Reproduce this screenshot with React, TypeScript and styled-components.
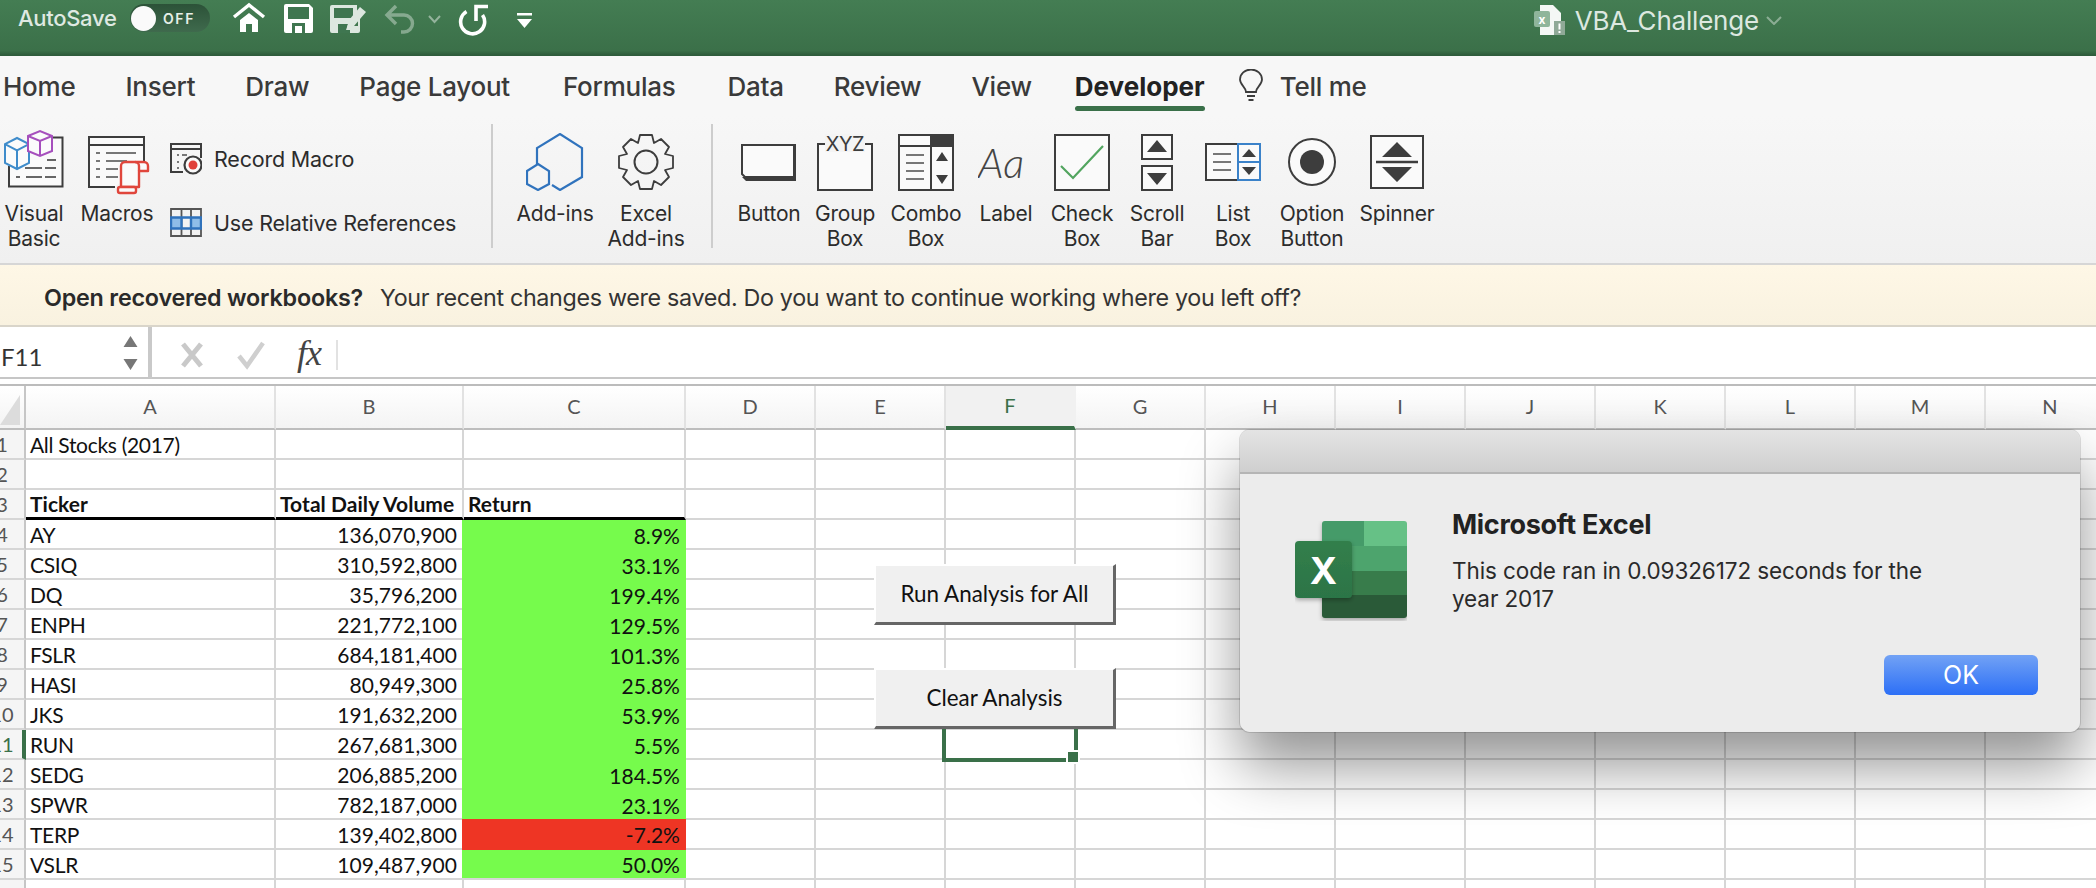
import React from "react";
import styled, { createGlobalStyle } from "styled-components";

const Global = createGlobalStyle`
  html, body { margin: 0; padding: 0; background: #fff; overflow: hidden; }
  * { box-sizing: border-box; }
  body { font-family: Inter, "Liberation Sans", sans-serif; }
`;

const Page = styled.div`
  width: 2096px; height: 888px; overflow: hidden;
  display: flex; flex-direction: column; position: relative;
`;

/* ---------- title bar ---------- */
const TitleBar = styled.header`
  height: 56px; flex: none; display: flex; align-items: flex-start;
  padding: 4px 314px 0 18px;
  background: linear-gradient(#447d53, #3b7049 92%, #2f5c3c);
  border-bottom: 1px solid #2f5c3c;
`;
const AutoSave = styled.span`
  width: 112px; font-size: 22px; line-height: 29px; font-weight: 500; letter-spacing: -0.3px;
  color: #dfe9e2; white-space: nowrap;
`;
const Toggle = styled.div`
  width: 80px; height: 28px; border-radius: 14px; background: linear-gradient(#2c5238, #3f6a4d);
  display: flex; align-items: center; gap: 7px; padding-left: 1px; margin-right: 22px;
`;
const Knob = styled.span`
  width: 25px; height: 25px; border-radius: 50%; background: #fafafa; flex: none;
`;
const OffText = styled.span`
  font-size: 14px; font-weight: 600; letter-spacing: 1.6px; color: #e6eee8;
`;
const QuickIcon = styled.svg<{ $gap?: number }>`
  flex: none; display: block; margin-left: ${(p) => p.$gap ?? 0}px;
`;
const FileName = styled.div`
  margin-left: auto; display: flex; align-items: center; gap: 7px; height: 32px;
  font-size: 26px; color: #dde8e0; letter-spacing: -0.2px;
`;

/* ---------- tabs ---------- */
const Tabs = styled.nav`
  height: 60px; flex: none; display: flex; align-items: flex-start; gap: 50px; padding: 14px 0 0 3px;
  background: #f7f7f7;
`;
const Tab = styled.span<{ $active?: boolean; $shift?: number }>`
  position: relative; font-size: 26px; line-height: 34px;
  margin-left: ${(p) => p.$shift ?? 0}px;
  letter-spacing: ${(p) => (p.$active ? "0" : "-0.25px")};
  font-weight: ${(p) => (p.$active ? 700 : 500)}; color: ${(p) => (p.$active ? "#222" : "#3a3a3a")};
  white-space: nowrap;
  ${(p) =>
    p.$active &&
    `&::after { content: ""; position: absolute; left: 0; right: 0; bottom: -7px; height: 5px; border-radius: 3px; background: #3a7049; }`}
`;
const TellMe = styled.div`
  display: flex; align-items: center; gap: 16px; margin-left: -17px;
`;

/* ---------- ribbon ---------- */
const Ribbon = styled.section`
  height: 149px; flex: none; display: flex; align-items: flex-start; padding-top: 6px;
  background: linear-gradient(#f7f7f7, #f0f0f0); border-bottom: 2px solid #d6d6d6;
`;
const Tool = styled.div<{ $w: number }>`
  width: ${(p) => p.$w}px; flex: none; display: flex; flex-direction: column; align-items: center;
`;
const ToolIcon = styled.div`
  height: 80px; display: flex; align-items: center; justify-content: center;
`;
const ToolLabel = styled.div`
  font-size: 21px; line-height: 24.5px; color: #2c2c2c; text-align: center; letter-spacing: -0.2px; white-space: nowrap;
`;
const SmallGroup = styled.div`
  width: 304px; flex: none; display: flex; flex-direction: column; margin: 5px 0 0 4px;
`;
const SmallRow = styled.div`
  height: 64px; display: flex; align-items: center; gap: 12px;
  font-size: 21.5px; color: #2c2c2c; letter-spacing: -0.2px; white-space: nowrap;
`;
const Divider = styled.div<{ $ml: number; $mr: number }>`
  width: 2px; height: 124px; background: #cdcdcd; flex: none; margin: 2px ${(p) => p.$mr}px 0 ${(p) => p.$ml}px;
`;

/* ---------- recovery banner ---------- */
const Banner = styled.div`
  height: 62px; flex: none; display: flex; align-items: center; gap: 17px; padding: 4px 0 0 44px;
  background: linear-gradient(#fef7e6, #f9f2e0); border-bottom: 2px solid #d9d5ca;
  font-size: 23.3px; color: #333; letter-spacing: -0.33px; white-space: nowrap;
`;
const BannerStrong = styled.strong`
  font-weight: 600; color: #2a2a2a; letter-spacing: -0.2px;
`;

/* ---------- formula bar ---------- */
const FormulaBar = styled.div`
  height: 59px; flex: none; display: flex; background: #fff;
  border-bottom: 2px solid #bcbcbc; position: relative;
`;
const FormulaEnd = styled.div`
  flex: 1; display: flex; align-items: flex-start; height: 52px;
  border-bottom: 2px solid #c6c6c6; padding-left: 28px;
`;
const NameBox = styled.div`
  width: 152px; height: 52px; flex: none; display: flex; align-items: center; justify-content: space-between;
  padding: 8px 10px 0 1px; border-right: 4px solid #c9c9c9; border-bottom: 2px solid #c6c6c6;
  font-family: Lato, sans-serif; font-size: 24px; color: #333;
`;
const Steppers = styled.svg`
  display: block; margin-top: -6px;
`;
const FormulaEdit = styled.div`
  flex: 1; height: 50px;
`;
const FormulaIcons = styled.div`
  display: flex; align-items: center; height: 50px; flex: none; padding-top: 5px;
`;
const Fx = styled.span`
  font-family: "Liberation Serif", serif; font-style: italic; font-size: 36px; color: #444; margin: -4px 15px 0 32px; letter-spacing: -1px;
`;
const FxBar = styled.span`
  width: 2px; height: 30px; background: #e2e2e2; margin-right: 20px;
`;

/* ---------- sheet ---------- */
const COLUMNS = "26px 250px 188px 222px repeat(11, 130px)";

const Sheet = styled.main`
  position: relative; flex: 1; min-height: 0; overflow: hidden; background: #fff;
  font-family: Lato, sans-serif; color: #111;
`;
const HeaderRow = styled.div`
  display: grid; grid-template-columns: ${COLUMNS}; height: 44px;
  background: linear-gradient(#fff, #f3f3f3);
`;
const Corner = styled.div`
  border-right: 2px solid #c6c6c6; border-bottom: 2px solid #bdbdbd; padding: 9px 4px 3px 0;
`;
const ColHead = styled.div<{ $active?: boolean }>`
  display: flex; align-items: center; justify-content: center; padding-bottom: 3px;
  font-size: 20px; color: ${(p) => (p.$active ? "#3a7049" : "#555")};
  background: ${(p) => (p.$active ? "#f1f1f1" : "transparent")};
  border-right: 2px solid ${(p) => (p.$active ? "#f1f1f1" : "#e2e2e2")};
  border-bottom: ${(p) => (p.$active ? "4px solid #3a7049" : "2px solid #bdbdbd")};
`;
const Row = styled.div`
  display: grid; grid-template-columns: ${COLUMNS}; height: 30px;
`;
const RowHead = styled.div<{ $active?: boolean }>`
  display: flex; justify-content: center; align-items: center; overflow: hidden;
  padding-right: ${(p) => (p.$active ? 18 : 20)}px;
  font-size: 20px; background: #f5f5f5; color: ${(p) => (p.$active ? "#3a7049" : "#555")};
  border-right: ${(p) => (p.$active ? "4px solid #3a7049" : "2px solid #c6c6c6")};
  border-bottom: 2px solid #d6d6d6;
`;
const RowNum = styled.span`
  flex: none; width: 8px; display: flex; justify-content: center;
`;
const Cell = styled.div<{ $right?: boolean; $bold?: boolean; $rule?: boolean }>`
  display: flex; align-items: center; overflow: hidden; white-space: nowrap;
  justify-content: ${(p) => (p.$right ? "flex-end" : "flex-start")};
  padding: 0 5px 0 4px;
  font-size: 21px; font-weight: ${(p) => (p.$bold ? 700 : 400)};
  letter-spacing: ${(p) => (p.$right || p.$bold ? "0.05px" : "-0.3px")};
  border-right: 2px solid #d6d6d6;
  border-bottom: ${(p) => (p.$rule ? "3px solid #000" : "2px solid #d6d6d6")};
`;
const FillCell = styled.div<{ $bad?: boolean; $last?: boolean }>`
  display: flex; align-items: center; justify-content: flex-end; white-space: nowrap;
  margin-left: -2px; padding: 0 6px 0 4px; position: relative;
  font-size: 21px; letter-spacing: 0.05px;
  background: ${(p) => (p.$bad ? "#ee3524" : "#76fb4c")};
  ${(p) => p.$bad && "margin-top: -1px;"}
  ${(p) => p.$last && "border-bottom: 2px solid #d6d6d6;"}
`;
const Selection = styled.div`
  position: absolute; left: 942px; top: 330px; width: 136px; height: 46px;
  border: 4px solid #3a7049; border-top: none;
`;
const Handle = styled.span`
  position: absolute; right: -6px; bottom: -6px; width: 14px; height: 14px;
  background: #3a7049; border: 2px solid #fff;
`;
const MacroButton = styled.div<{ $top: number }>`
  position: absolute; left: 874px; top: ${(p) => p.$top}px; width: 242px; height: 61px;
  display: flex; align-items: center; justify-content: center; padding-bottom: 1px;
  background: #f0f0f0; color: #111; font-size: 22.4px; letter-spacing: 0;
  border-style: solid; border-width: 2px 3px 3px 2px; border-color: #fff #666 #666 #fff;
`;

/* ---------- dialog ---------- */
const Dialog = styled.aside`
  position: absolute; left: 1240px; top: 44px; width: 840px; height: 302px;
  display: flex; flex-direction: column; border-radius: 10px; overflow: hidden;
  background: #ececec; font-family: Inter, sans-serif;
  box-shadow: 0 0 0 1px rgba(0,0,0,.12);
`;
const DialogShadow = styled.div`
  position: absolute; left: 1240px; top: 44px; width: 840px; height: 302px; border-radius: 10px;
  box-shadow: 0 34px 58px rgba(0,0,0,.42);
`;
const DialogHead = styled.div`
  height: 44px; flex: none; background: linear-gradient(#e4e4e4, #cfcfcf); border-bottom: 2px solid #b5b5b5;
`;
const DialogBody = styled.div`
  flex: 1; display: flex; padding-left: 55px;
`;
const ExcelIcon = styled.svg`
  flex: none; margin: 47px 45px 0 0; display: block;
`;
const DialogText = styled.div`
  width: 510px; padding-top: 35px;
`;
const DialogTitle = styled.div`
  font-size: 27px; line-height: 32px; font-weight: 700; color: #222; letter-spacing: -0.3px;
`;
const DialogMessage = styled.div`
  margin-top: 16px; font-size: 22.5px; line-height: 28px; color: #2a2a2a; letter-spacing: -0.1px;
`;
const DialogFooter = styled.div`
  display: flex; justify-content: flex-end; padding: 0 42px 37px 0;
`;
const OkButton = styled.div`
  width: 154px; height: 40px; border-radius: 6px; display: flex; align-items: center; justify-content: center;
  background: linear-gradient(#72a2f5, #2c6ff6); color: #fff; font-size: 25px;
`;

/* ---------- drawings ---------- */
const D = "#3d3d3d";

const Home = () => (
  <QuickIcon $gap={0} width="34" height="30" viewBox="0 0 34 30" style={{ marginTop: -2 }}>
    <path d="M2 15 17 3 32 15" fill="none" stroke="#fff" strokeWidth="3.4" />
    <path d="M8 18 17 11 26 18V30H20V22H14V30H8Z" fill="#fff" />
  </QuickIcon>
);
const Save = () => (
  <QuickIcon $gap={18} width="29" height="29" viewBox="0 0 29 29">
    <path d="M2 0H25L29 4V27a2 2 0 0 1-2 2H2a2 2 0 0 1-2-2V2a2 2 0 0 1 2-2Z" fill="#fff" />
    <rect x="4" y="3" width="21" height="12" fill="#3f7650" />
    <path d="M8 29V19H21V29Z" fill="#3f7650" />
    <rect x="11" y="22" width="7" height="7" fill="#fff" />
  </QuickIcon>
);
const SaveEdit = () => (
  <QuickIcon $gap={17} width="38" height="29" viewBox="0 0 38 29">
    <path d="M2 1H27V8L21 15V22H28V13L30 11V27a2 2 0 0 1-2 2H2a2 2 0 0 1-2-2V3a2 2 0 0 1 2-2Z" fill="#dce7df" />
    <rect x="4" y="4" width="19" height="10" fill="#3f7650" />
    <path d="M8 29V20H18L16 26 20 26V29Z" fill="#3f7650" />
    <path d="M30 3 36 8 24 22 17 24 19 16Z" fill="#dce7df" />
  </QuickIcon>
);
const Undo = () => (
  <QuickIcon $gap={16} width="31" height="30" viewBox="0 0 31 30" opacity=".42">
    <path d="M12 2 3 11 12 20M3 11H20a8.500 8.500 0 0 1 0 17H17" fill="none" stroke="#e6eee8" strokeWidth="3.4" />
  </QuickIcon>
);
const MiniChevron = () => (
  <QuickIcon $gap={13} width="13" height="9" viewBox="0 0 13 9" opacity=".5" style={{ marginTop: 11 }}>
    <path d="M1 1 6.500 7 12 1" fill="none" stroke="#e6eee8" strokeWidth="2" />
  </QuickIcon>
);
const Redo = () => (
  <QuickIcon $gap={17} width="30" height="32" viewBox="0 0 30 32">
    <path d="M8.500 7.500A12 12 0 1 0 24.500 11" fill="none" stroke="#fff" strokeWidth="3.600" />
    <path d="M18 17V2.500H30" fill="none" stroke="#fff" strokeWidth="3.600" />
  </QuickIcon>
);
const Customize = () => (
  <QuickIcon $gap={29} width="15" height="15" viewBox="0 0 15 15" style={{ marginTop: 9 }}>
    <rect x="0" y="0" width="15" height="2.5" fill="#fff" />
    <path d="M0 6H15L7.500 15Z" fill="#fff" />
  </QuickIcon>
);
const DocIcon = () => (
  <svg width="34" height="30" viewBox="0 0 34 30">
    <path d="M6 0H19L27 8V30H6Z" fill="#f4f7f5" />
    <rect x="0" y="6" width="16" height="16" rx="2" fill="#8fb59b" />
    <text x="8" y="19" fontFamily="Inter" fontSize="12" fontWeight="700" fill="#fff" textAnchor="middle">x</text>
    <rect x="20" y="16" width="11" height="14" fill="#8fa997" />
    <rect x="24.5" y="18.5" width="2" height="6" fill="#fff" />
    <rect x="24.5" y="26" width="2" height="2" fill="#fff" />
  </svg>
);
const Bulb = () => (
  <svg width="26" height="34" viewBox="0 0 26 34" style={{ marginTop: -2 }}>
    <path d="M8 23C8 18 2 16 2 10.500A11 10 0 0 1 24 10.500C24 16 18 18 18 23Z" fill="none" stroke="#3d3d3d" strokeWidth="1.8" />
    <path d="M9 27H17M10.500 31H15.500" stroke="#3d3d3d" strokeWidth="2" />
  </svg>
);
const Cube = ({ c, x, y, w, h }: { c: string; x: number; y: number; w: number; h: number }) => {
  const t = h * 0.2;
  const m = x + w / 2;
  return (
    <g fill="#fbfbfb" stroke={c} strokeWidth="2">
      <path d={`M${x} ${y + t}L${m} ${y}L${x + w} ${y + t}V${y + h - t}L${m} ${y + h}L${x} ${y + h - t}Z`} />
      <path d={`M${x} ${y + t}L${m} ${y + 2 * t}L${x + w} ${y + t}M${m} ${y + 2 * t}V${y + h}`} fill="none" />
    </g>
  );
};
const VbIcon = () => (
  <svg width="68" height="80" viewBox="0 0 68 80">
    <path d="M50 15.500H62.500V64.500H9V44" fill="#fafafa" stroke={D} strokeWidth="2" />
    <path d="M47 38H56M25 46H42M45 46H56M16 55H20M26 55H42M45 55H56" stroke="#666" strokeWidth="2" />
    <Cube c="#3f8ccb" x={5} y={16} w={24} h={31} />
    <Cube c="#a64fbd" x={28} y={9} w={24} h={25} />
  </svg>
);
const MacrosIcon = () => (
  <svg width="98" height="80" viewBox="0 0 98 80">
    <path d="M47 65H21V15H76V40" fill="#fafafa" stroke={D} strokeWidth="2" />
    <path d="M21 23H76" stroke={D} strokeWidth="2" />
    <path d="M28 31H32M38 31H68M28 39H32M38 39H59M28 47H32M38 47H50M28 55H32M38 55H50" stroke="#777" strokeWidth="2" />
    <path d="M53 65V44a4 4 0 0 1 4-4H76a4 4 0 0 1 4 4V49H71V65H53Z" fill="#fafafa" stroke="#e0463c" strokeWidth="2.400" strokeLinejoin="round" />
    <path d="M67 40a4 4 0 0 1 4 4V49" fill="none" stroke="#e0463c" strokeWidth="2.400" />
    <rect x="50" y="65" width="18" height="6" rx="2" fill="#fafafa" stroke="#e0463c" strokeWidth="2.400" />
  </svg>
);
const RecordIcon = () => (
  <svg width="32" height="32" viewBox="0 0 32 32">
    <path d="M31 15V1H1V29H13M1 6H31" fill="none" stroke={D} strokeWidth="2" />
    <path d="M7 12H9M7 19H9M7 25H9M12 12H17" stroke="#777" strokeWidth="2" />
    <circle cx="23" cy="22" r="8.500" fill="#fafafa" stroke={D} strokeWidth="2.200" />
    <circle cx="23" cy="22" r="4.500" fill="#e0403a" />
  </svg>
);
const RelativeIcon = () => (
  <svg width="32" height="30" viewBox="0 0 32 30">
    <path d="M1 1H31V28H1ZM11.500 1V28M21 1V28" fill="none" stroke="#555" strokeWidth="1.800" />
    <rect x="1" y="9.500" width="10.500" height="11" fill="#8fbde8" />
    <rect x="21" y="9.500" width="10" height="11" fill="#8fbde8" />
    <path d="M1 9.500H31V20.500H1ZM11.500 9.500V20.500M21 9.500V20.500" fill="none" stroke="#2f72bc" strokeWidth="2.400" />
  </svg>
);
const AddInsIcon = () => (
  <svg width="58" height="58" viewBox="0 0 58 58">
    <path d="M11 32V15L34 1 56 15V44L34 57 26 52" fill="none" stroke="#3073bd" strokeWidth="2.200" />
    <path d="M12 31 23 38V51L12 57 1 51V38Z" fill="none" stroke="#3073bd" strokeWidth="2.200" />
  </svg>
);
const GearIcon = () => (
  <svg width="58" height="58" viewBox="0 0 58 58">
    <path
      d="M23 2H35L37 10 44 6 52 14 48 21 56 23V35L48 37 52 44 44 52 37 48 35 56H23L21 48 14 52 6 44 10 37 2 35V23L10 21 6 14 14 6 21 10Z"
      fill="none" stroke={D} strokeWidth="1.800" strokeLinejoin="round"
    />
    <circle cx="29" cy="29" r="11.500" fill="none" stroke={D} strokeWidth="2" />
  </svg>
);
const ButtonIcon = () => (
  <svg width="56" height="37" viewBox="0 0 56 37">
    <path d="M1 1H54V33H4L1 30Z" fill="#fafafa" stroke={D} strokeWidth="2" />
    <path d="M55 1V37H5L1 33H52V1Z" fill={D} />
  </svg>
);
const GroupIcon = () => (
  <svg width="56" height="57" viewBox="0 0 56 57">
    <rect x="1" y="10" width="54" height="46" fill="#fafafa" stroke={D} strokeWidth="2" />
    <rect x="8" y="0" width="40" height="18" fill="#f4f4f4" />
    <text x="28" y="17" fontFamily="Inter" fontSize="20" fill={D} textAnchor="middle" letterSpacing="-0.500">XYZ</text>
  </svg>
);
const ComboIcon = () => (
  <svg width="56" height="57" viewBox="0 0 56 57">
    <rect x="1" y="1" width="54" height="55" fill="#fafafa" stroke={D} strokeWidth="2" />
    <rect x="32" y="1" width="23" height="11" fill={D} />
    <path d="M1 12H55M33 12V56" stroke={D} strokeWidth="2" />
    <path d="M8 21H26M8 29H26M8 37H26M8 45H26" stroke="#777" strokeWidth="2" />
    <path d="M38 27 44 18 50 27ZM38 41H50L44 50Z" fill={D} />
  </svg>
);
const LabelIcon = () => (
  <svg width="56" height="40" viewBox="0 0 56 40">
    <text x="0" y="36" fontFamily="Lato, sans-serif" fontWeight="300" fontStyle="italic" fontSize="42" fill="#444">Aa</text>
  </svg>
);
const CheckIcon = () => (
  <svg width="56" height="57" viewBox="0 0 56 57">
    <rect x="1" y="1" width="54" height="55" fill="#fafafa" stroke={D} strokeWidth="2" />
    <path d="M7 32 19 44 49 12" fill="none" stroke="#52a55f" strokeWidth="2.200" />
  </svg>
);
const ScrollIcon = () => (
  <svg width="32" height="57" viewBox="0 0 32 57">
    <rect x="1" y="1" width="30" height="24" fill="#fafafa" stroke={D} strokeWidth="2" />
    <rect x="1" y="32" width="30" height="24" fill="#fafafa" stroke={D} strokeWidth="2" />
    <path d="M6 18 16 6 26 18ZM6 39H26L16 51Z" fill={D} />
  </svg>
);
const ListIcon = () => (
  <svg width="56" height="38" viewBox="0 0 56 38">
    <rect x="1" y="1" width="54" height="36" fill="#fafafa" stroke={D} strokeWidth="2" />
    <path d="M8 11H26M8 19H26M8 27H26" stroke="#777" strokeWidth="2" />
    <rect x="33" y="1" width="22" height="18" fill="#fafafa" stroke="#3b82c9" strokeWidth="2" />
    <rect x="33" y="19" width="22" height="18" fill="#fafafa" stroke="#3b82c9" strokeWidth="2" />
    <path d="M37 14 44 6 51 14ZM37 24H51L44 32Z" fill={D} />
  </svg>
);
const OptionIcon = () => (
  <svg width="48" height="48" viewBox="0 0 48 48">
    <circle cx="24" cy="24" r="23" fill="#fafafa" stroke={D} strokeWidth="2" />
    <circle cx="24" cy="24" r="12" fill={D} />
  </svg>
);
const SpinnerIcon = () => (
  <svg width="54" height="54" viewBox="0 0 54 54">
    <rect x="1" y="1" width="52" height="52" fill="#fafafa" stroke={D} strokeWidth="2" />
    <path d="M12 22 27 7 42 22ZM12 32H42L27 47Z" fill={D} />
    <path d="M6 27H48" stroke={D} strokeWidth="2.500" />
  </svg>
);

const Excel = () => (
  <ExcelIcon width="112" height="100" viewBox="0 0 112 100">
    <defs>
      <filter id="soft" x="-20%" y="-20%" width="140%" height="140%">
        <feDropShadow dx="0" dy="2" stdDeviation="2" floodOpacity=".3" />
      </filter>
      <linearGradient id="front" x1="0" y1="0" x2="0" y2="1">
        <stop offset="0" stopColor="#327f4c" />
        <stop offset="1" stopColor="#2c7446" />
      </linearGradient>
    </defs>
    <g filter="url(#soft)">
      <path d="M30 0H69V25H27V3a3 3 0 0 1 3-3Z" fill="#459b69" />
      <path d="M69 0H109a3 3 0 0 1 3 3V25H69Z" fill="#66c186" />
      <rect x="27" y="25" width="85" height="25" fill="#4ea46d" />
      <rect x="27" y="50" width="85" height="24" fill="#397c4c" />
      <path d="M27 74H112V94a3 3 0 0 1-3 3H30a3 3 0 0 1-3-3Z" fill="#2a5a38" />
    </g>
    <g filter="url(#soft)">
      <rect x="0" y="20" width="57" height="57" rx="4" fill="url(#front)" />
    </g>
    <text x="28.500" y="63" fontFamily="Inter" fontSize="37" fontWeight="700" fill="#fff" textAnchor="middle">X</text>
  </ExcelIcon>
);

/* ---------- data ---------- */
const COLS = ["A", "B", "C", "D", "E", "F", "G", "H", "I", "J", "K", "L", "M", "N"];
const DATA: [string, string, string][] = [
  ["AY", "136,070,900", "8.9%"],
  ["CSIQ", "310,592,800", "33.1%"],
  ["DQ", "35,796,200", "199.4%"],
  ["ENPH", "221,772,100", "129.5%"],
  ["FSLR", "684,181,400", "101.3%"],
  ["HASI", "80,949,300", "25.8%"],
  ["JKS", "191,632,200", "53.9%"],
  ["RUN", "267,681,300", "5.5%"],
  ["SEDG", "206,885,200", "184.5%"],
  ["SPWR", "782,187,000", "23.1%"],
  ["TERP", "139,402,800", "-7.2%"],
  ["VSLR", "109,487,900", "50.0%"],
];
const TOOLS_A = [
  { w: 90, lines: ["Add-ins"], icon: <AddInsIcon /> },
  { w: 92, lines: ["Excel", "Add-ins"], icon: <GearIcon /> },
];
const TOOLS_B = [
  { w: 78, lines: ["Button"], icon: <ButtonIcon /> },
  { w: 74, lines: ["Group", "Box"], icon: <GroupIcon /> },
  { w: 88, lines: ["Combo", "Box"], icon: <ComboIcon /> },
  { w: 72, lines: ["Label"], icon: <LabelIcon /> },
  { w: 80, lines: ["Check", "Box"], icon: <CheckIcon /> },
  { w: 70, lines: ["Scroll", "Bar"], icon: <ScrollIcon /> },
  { w: 82, lines: ["List", "Box"], icon: <ListIcon /> },
  { w: 76, lines: ["Option", "Button"], icon: <OptionIcon /> },
  { w: 94, lines: ["Spinner"], icon: <SpinnerIcon /> },
];
const TABS: { label: string; shift?: number }[] = [
  { label: "Home" },
  { label: "Insert" },
  { label: "Draw" },
  { label: "Page Layout" },
  { label: "Formulas", shift: 3 },
  { label: "Data", shift: 2 },
  { label: "Review" },
  { label: "View" },
];

const Tools = ({ items }: { items: { w: number; lines: string[]; icon: React.ReactNode }[] }) => (
  <>
    {items.map((t) => (
      <Tool key={t.lines.join()} $w={t.w}>
        <ToolIcon>{t.icon}</ToolIcon>
        {t.lines.map((l) => (
          <ToolLabel key={l}>{l}</ToolLabel>
        ))}
      </Tool>
    ))}
  </>
);

const EmptyCells = ({ from }: { from: number }) => (
  <>
    {COLS.slice(from).map((c) => (
      <Cell key={c} />
    ))}
  </>
);

export default function App() {
  return (
    <Page>
      <Global />
      <TitleBar>
        <AutoSave>AutoSave</AutoSave>
        <Toggle>
          <Knob />
          <OffText>OFF</OffText>
        </Toggle>
        <Home />
        <Save />
        <SaveEdit />
        <Undo />
        <MiniChevron />
        <Redo />
        <Customize />
        <FileName>
          <DocIcon />
          <span>VBA_Challenge</span>
          <svg width="16" height="9" viewBox="0 0 16 9" opacity=".45">
            <path d="M1 1 8 8 15 1" fill="none" stroke="#e6eee8" strokeWidth="2" />
          </svg>
        </FileName>
      </TitleBar>

      <Tabs>
        {TABS.map((t) => (
          <Tab key={t.label} $shift={t.shift}>{t.label}</Tab>
        ))}
        <Tab $active $shift={-7}>Developer</Tab>
        <TellMe>
          <Bulb />
          <Tab>Tell me</Tab>
        </TellMe>
      </Tabs>

      <Ribbon>
        <Tool $w={68}>
          <ToolIcon><VbIcon /></ToolIcon>
          <ToolLabel>Visual</ToolLabel>
          <ToolLabel>Basic</ToolLabel>
        </Tool>
        <Tool $w={98}>
          <ToolIcon><MacrosIcon /></ToolIcon>
          <ToolLabel>Macros</ToolLabel>
        </Tool>
        <SmallGroup>
          <SmallRow><RecordIcon />Record Macro</SmallRow>
          <SmallRow><RelativeIcon />Use Relative References</SmallRow>
        </SmallGroup>
        <Divider $ml={17} $mr={17} />
        <Tools items={TOOLS_A} />
        <Divider $ml={19} $mr={17} />
        <Tools items={TOOLS_B} />
      </Ribbon>

      <Banner>
        <BannerStrong>Open recovered workbooks?</BannerStrong>
        <span>Your recent changes were saved. Do you want to continue working where you left off?</span>
      </Banner>

      <FormulaBar>
        <NameBox>
          F11
          <Steppers width="15" height="34" viewBox="0 0 15 34">
            <path d="M0.500 11 7.500 0 14.500 11ZM0.500 23H14.500L7.500 34Z" fill="#777" />
          </Steppers>
        </NameBox>
        <FormulaEnd>
          <FormulaIcons>
            <svg width="24" height="30" viewBox="0 0 24 30">
              <path d="M3 4 21 26M21 4 3 26" stroke="#c9c9c9" strokeWidth="5" />
            </svg>
            <svg width="28" height="30" viewBox="0 0 28 30" style={{ marginLeft: 33 }}>
              <path d="M2 16 10 26 26 3" fill="none" stroke="#cfcfcf" strokeWidth="4.500" />
            </svg>
            <Fx>fx</Fx>
            <FxBar />
          </FormulaIcons>
          <FormulaEdit />
        </FormulaEnd>
      </FormulaBar>

      <Sheet>
        <HeaderRow>
          <Corner>
            <svg width="20" height="30" viewBox="0 0 20 30" style={{ display: "block" }}>
              <path d="M20 0V30H0Z" fill="#dcdcdc" />
            </svg>
          </Corner>
          {COLS.map((c) => (
            <ColHead key={c} $active={c === "F"}>{c}</ColHead>
          ))}
        </HeaderRow>

        <Row>
          <RowHead><RowNum>1</RowNum></RowHead>
          <Cell>All Stocks (2017)</Cell>
          <EmptyCells from={1} />
        </Row>
        <Row>
          <RowHead><RowNum>2</RowNum></RowHead>
          <EmptyCells from={0} />
        </Row>
        <Row>
          <RowHead><RowNum>3</RowNum></RowHead>
          <Cell $bold $rule>Ticker</Cell>
          <Cell $bold $rule>Total Daily Volume</Cell>
          <Cell $bold $rule>Return</Cell>
          <EmptyCells from={3} />
        </Row>
        {DATA.map(([ticker, volume, ret], i) => (
          <Row key={ticker}>
            <RowHead $active={i + 4 === 11}><RowNum>{i + 4}</RowNum></RowHead>
            <Cell>{ticker}</Cell>
            <Cell $right>{volume}</Cell>
            <FillCell $bad={ret.startsWith("-")} $last={i === DATA.length - 1}>{ret}</FillCell>
            <EmptyCells from={3} />
          </Row>
        ))}
        <Row>
          <RowHead><RowNum>16</RowNum></RowHead>
          <EmptyCells from={0} />
        </Row>

        <Selection><Handle /></Selection>
        <MacroButton $top={178}>Run Analysis for All</MacroButton>
        <MacroButton $top={282}>Clear Analysis</MacroButton>

        <DialogShadow />
        <Dialog>
          <DialogHead />
          <DialogBody>
            <Excel />
            <DialogText>
              <DialogTitle>Microsoft Excel</DialogTitle>
              <DialogMessage>This code ran in 0.09326172 seconds for the year 2017</DialogMessage>
            </DialogText>
          </DialogBody>
          <DialogFooter>
            <OkButton>OK</OkButton>
          </DialogFooter>
        </Dialog>
      </Sheet>
    </Page>
  );
}
